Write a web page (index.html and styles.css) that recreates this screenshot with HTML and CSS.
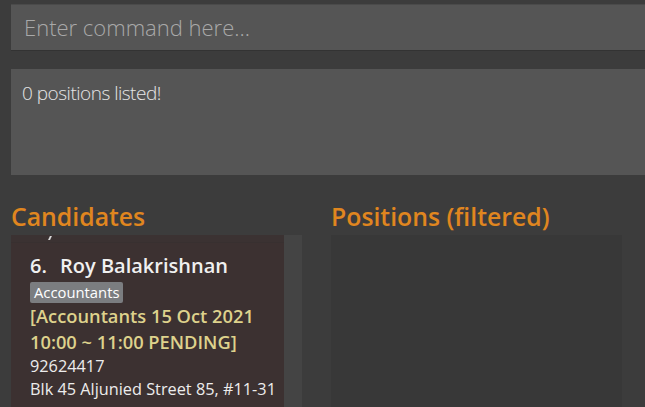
FILE: index.html
```html
<!DOCTYPE html>
<html>
<head>
<meta charset="utf-8">
<link rel="stylesheet" href="styles.css">
</head>
<body>
<div class="app">
  <div class="command-wrap">
    <input class="command" type="text" placeholder="Enter command here...">
  </div>
  <div class="result-wrap">
    <div class="result">0 positions listed!</div>
  </div>
  <div class="panels">
    <section class="panel panel-candidates">
      <h2 class="panel-title">Candidates</h2>
      <div class="list-row">
        <div class="list">
          <div class="prev-card"></div>
          <div class="card">
            <div class="name"><span class="idx">6.</span>Roy Balakrishnan</div>
            <div class="tags"><span class="tag">Accountants</span></div>
            <div class="interview">[Accountants 15 Oct 2021 10:00 ~ 11:00 PENDING]</div>
            <div class="detail">92624417</div>
            <div class="detail">Blk 45 Aljunied Street 85, #11-31</div>
          </div>
        </div>
        <div class="scrollbar"></div>
      </div>
    </section>
    <section class="panel panel-positions">
      <h2 class="panel-title">Positions (filtered)</h2>
      <div class="list empty"></div>
    </section>
  </div>
</div>
</body>
</html>
```

FILE: styles.css
```css
html, body {
  margin: 0;
  padding: 0;
  background: #3c3c3c;
  font-family: "Open Sans", "Noto Sans", sans-serif;
  overflow: hidden;
  height: 407px;
}
.app {
  display: flex;
  flex-direction: column;
  width: 645px;
}
.command-wrap {
  padding: 4px 0 0 11px;
}
.command {
  display: block;
  box-sizing: border-box;
  width: 660px;
  height: 47px;
  margin: 0;
  border: none;
  border-top: 1px solid #4a4a4a;
  border-bottom: 1px solid #333;
  background: #555555;
  padding: 0 0 1px 13px;
  font-family: "Open Sans", sans-serif;
  font-weight: 300;
  font-size: 22px;
  color: #ddd;
  outline: none;
}
.command::placeholder {
  color: #a9a9a9;
}
.result-wrap {
  padding: 18px 0 0 11px;
}
.result {
  box-sizing: border-box;
  width: 660px;
  height: 106px;
  background: #555555;
  padding: 11px 11px;
  font-weight: 300;
  font-size: 19px;
  letter-spacing: -0.5px;
  line-height: 26px;
  color: #e6e6e6;
}
.panels {
  display: flex;
  gap: 29px;
  padding: 26px 0 0 11px;
}
.panel-title {
  margin: 0 0 4px 0;
  font-size: 24.8px;
  font-weight: 600;
  color: #e0861f;
  line-height: 30px;
}
.panel-candidates {
  width: 291px;
}
.list-row {
  display: flex;
  height: 180px;
}
.list {
  flex: 1;
  background: #3c3131;
}
.scrollbar {
  width: 18px;
  background: #444444;
}
.prev-card {
  height: 7px;
  position: relative;
  background: #3b3232;
  border-bottom: 1px solid #383030;
}
.prev-card::after {
  content: "";
  position: absolute;
  left: 38px;
  top: 1px;
  width: 2px;
  height: 4px;
  background: #d8d8d8;
  transform: skewX(-25deg);
}
.card {
  padding: 10px 4px 0 19px;
  color: #f2f2f2;
}
.name {
  font-size: 20px;
  font-weight: 600;
  line-height: 26px;
  color: #f0f0f0;
}
.idx {
  display: inline-block;
  width: 30px;
}
.tags {
  margin: 2px 0 1px;
  height: 21px;
}
.tag {
  display: inline-block;
  background: #7b7d80;
  color: #fff;
  font-size: 14.8px;
  line-height: 21px;
  padding: 0 4px;
  border-radius: 2px;
}
.interview {
  font-size: 18.3px;
  font-weight: 600;
  line-height: 26px;
  color: #ded28c;
}
.detail {
  font-size: 16.3px;
  line-height: 23px;
  color: #ececec;
  white-space: nowrap;
}
.panel-positions {
  width: 291px;
  display: flex;
  flex-direction: column;
}
.list.empty {
  height: 180px;
  flex: none;
  background: #383838;
}
```
